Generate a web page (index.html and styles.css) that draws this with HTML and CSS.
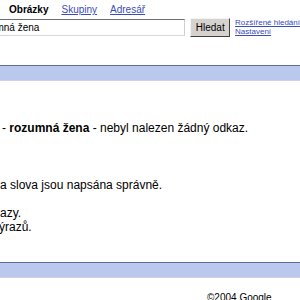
FILE: index.html
```html
<!DOCTYPE html>
<html lang="cs">
<head>
  <meta charset="UTF-8">
  <title>Google - hledání</title>
  <link rel="stylesheet" href="styles.css">
</head>
<body>
  <div class="top">
    <div class="tabs">
      <b>Obrázky</b>
      <a href="#">Skupiny</a>
      <a href="#">Adresář</a>
    </div>
    <form class="search">
      <input type="text" name="q" value="rozumná žena">
      <button type="submit">Hledat</button>
      <div class="opts">
        <a href="#">Rozšířené hledání</a>
        <a href="#">Nastavení</a>
      </div>
    </form>
  </div>

  <div class="bar"></div>

  <div class="results">
    <p class="summary">- <b>rozumná žena</b> - nebyl nalezen žádný odkaz.</p>
    <ul class="tips">
      <li>a slova jsou napsána správně.</li>
      <li>&nbsp;</li>
      <li>azy.</li>
      <li class="cut">ýrazů.</li>
    </ul>
  </div>

  <div class="bar bottom"></div>

  <div class="footer">&copy;2004 Google</div>
</body>
</html>
```

FILE: styles.css
```css
body {
  margin: 0;
  font-family: "Liberation Sans", Arial, sans-serif;
  font-size: 12px;
  color: #000;
  background: #fff;
  overflow: hidden;
}

a {
  color: #3a4cb8;
}

.top {
  height: 37px;
}

.tabs {
  display: flex;
  gap: 13px;
  padding: 4px 0 0 9px;
  font-size: 10px;
  line-height: 12px;
}

.search {
  display: flex;
  align-items: flex-start;
  margin: 2px 0 0 0;
}

.search input {
  width: 215px;
  height: 17px;
  margin: 1px 0 0 -28px;
  padding: 0 3px;
  box-sizing: border-box;
  border: 1px solid;
  border-color: #6f6f6f #cfcfcf #d8d8d8 #6f6f6f;
  font-family: "Liberation Sans", Arial, sans-serif;
  font-size: 10px;
  color: #000;
  outline: none;
}

.search button {
  width: 40px;
  height: 19px;
  margin-left: 5px;
  padding: 0;
  border: 1px solid;
  border-color: #f4f4f4 #404040 #404040 #f4f4f4;
  background: #d6d3ce;
  font-family: "Liberation Sans", Arial, sans-serif;
  font-size: 10px;
  color: #000;
}

.opts {
  display: flex;
  flex-direction: column;
  margin-left: 5px;
  font-size: 8px;
  line-height: 9px;
  white-space: nowrap;
}

.bar {
  margin-top: 28px;
  height: 14px;
  background: #bac8ed;
  border-top: 1px solid #5b6c9c;
  border-bottom: 1px solid #d3cfe6;
}

.results {
  line-height: 14px;
}

.summary {
  margin: 40px 0 0 0;
  padding-left: 2px;
}

.tips {
  list-style: none;
  margin: 43px 0 0 0;
  padding: 0;
}

.tips .cut {
  margin-left: -1px;
}

.bar.bottom {
  margin-top: 28px;
}

.footer {
  margin-top: 14px;
  padding-left: 207px;
  font-size: 10px;
  line-height: 12px;
}
```
